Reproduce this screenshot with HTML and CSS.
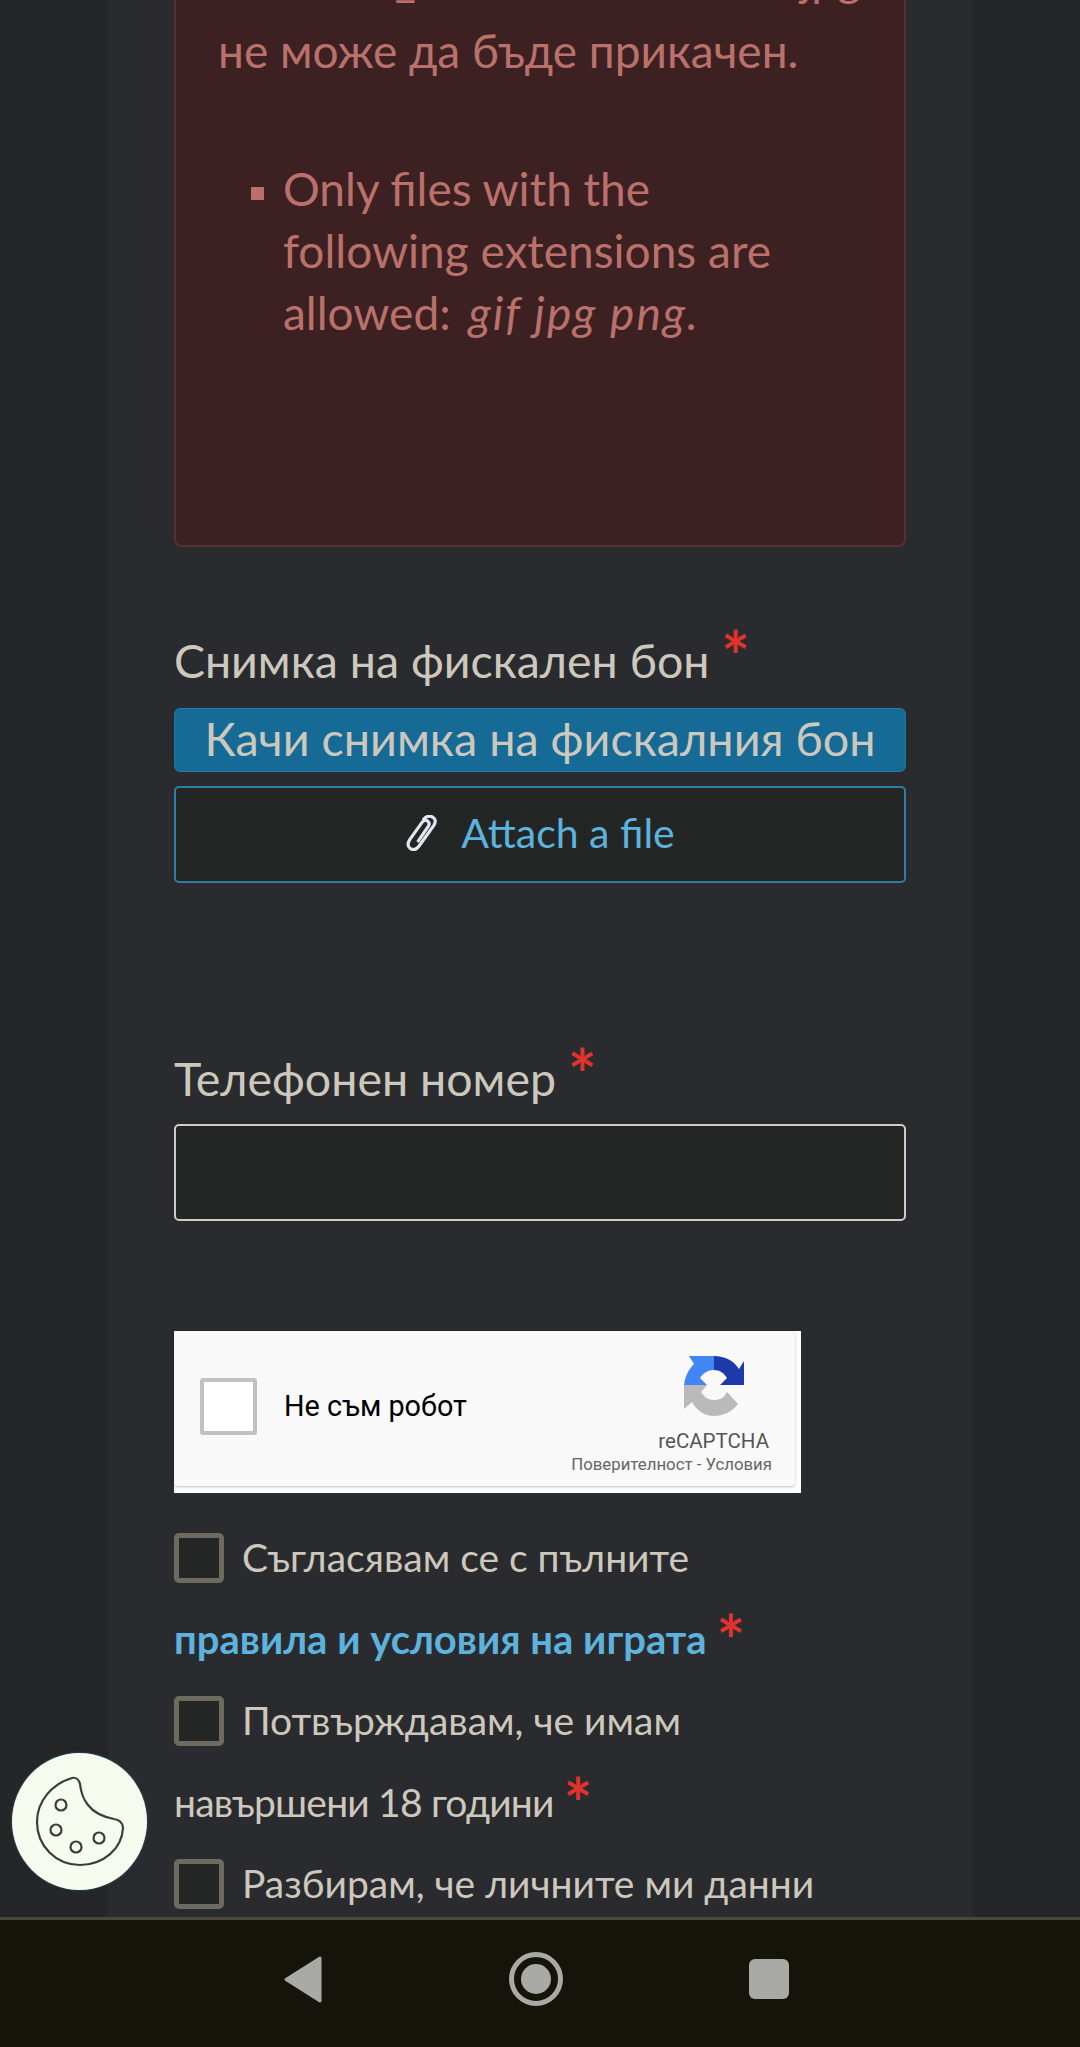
FILE: index.html
```html
<!DOCTYPE html>
<html lang="bg">
<head>
    <meta charset="UTF-8">
    <meta name="viewport" content="width=device-width, initial-scale=1.0">
    <title>Регистрация на фискален бон</title>
    <link rel="stylesheet" href="styles.css">
</head>
<body>
    <div class="screen">
        <div class="content">
            <form class="panel">
                <!-- Upload error -->
                <div class="alert">
                    <p class="alert-text"><span class="alert-file">Файл 12_20230415123456.jpg</span> не може да бъде прикачен.</p>
                    <ul class="alert-list">
                        <li lang="en">Only files with the following extensions are allowed: <em>gif jpg png.</em></li>
                    </ul>
                </div>

                <div class="field field-file">
                    <label class="field-label">Снимка на фискален бон <span class="req">*</span></label>
                    <div class="upload-title">Качи снимка на фискалния бон</div>
                    <button type="button" class="attach" lang="en">
                        <svg class="clip" viewBox="0 0 30 34" fill="none" stroke="#e2e6f0" stroke-width="3" stroke-linecap="round" stroke-linejoin="round">
                            <path d="M12.500 24.500 L22 10.500 C23.500 8 22.500 6.500 21 5.500 C19.500 4.500 17.500 5 16 7 L4.500 23 C2 27 2.500 30 5 31.800 C7.500 33.300 10.500 32.800 13 29.500 L27 10 C29.500 6 28.500 3.500 26 2 C23 0.500 20 1 17.500 4"/>
                        </svg>
                        Attach a file
                    </button>
                </div>

                <div class="field field-phone">
                    <label class="field-label">Телефонен номер <span class="req">*</span></label>
                    <input type="text" class="text-input">
                </div>

                <!-- reCAPTCHA widget -->
                <div class="captcha">
                    <div class="captcha-card">
                        <span class="captcha-box"></span>
                        <span class="captcha-label">Не съм робот</span>
                        <div class="captcha-brand">
                            <svg class="captcha-logo" viewBox="0 0 60 62">
                                <path fill="#4285f4" d="M0 30 C1 22 4 15 10 9 L5 1 L30 1 L30 15 C24 15 19 18 16 23 L23 30 Z"/>
                                <path fill="#1c3aa9" d="M30 1 C41 1 50 6 55 14 L60 6 L60 30 L36 30 L43 23 C40 18 36 15 30 15 Z"/>
                                <path fill="#bababa" d="M0 30 L23 30 L17 37 C20 42 24 45 30 45 C36 45 40 43 43 37 L54 49 C49 56 40 61 30 61 C21 61 13 56 8 47 L0 54 Z"/>
                            </svg>
                            <span class="captcha-name" lang="en">reCAPTCHA</span>
                            <span class="captcha-links">Поверителност - Условия</span>
                        </div>
                    </div>
                </div>

                <div class="consents">
                    <label class="consent"><span class="check"></span>Съгласявам се с пълните <a href="#" class="terms">правила и условия на играта</a> <span class="req">*</span></label>
                    <label class="consent"><span class="check"></span>Потвърждавам, че имам <span class="keep">навършени 18 години</span> <span class="req">*</span></label>
                    <label class="consent"><span class="check"></span>Разбирам, че личните ми данни <span class="keep">ще бъдат обработени</span></label>
                </div>
            </form>

            <button type="button" class="cookie-btn" aria-label="Бисквитки">
                <svg viewBox="0 0 135 137" fill="none" stroke="#3b3d3a" stroke-width="2.200">
                    <path d="M60 25 C64 24 67 27 68 31 C69 40 71 46 76 52 C82 60 92 64 102 66 C108 67 111 70 111 75 C110 96 91 112 68 112 C44 112 25 93 25 69 C25 48 40 31 60 25 Z"/>
                    <circle cx="49" cy="52" r="5.500"/>
                    <circle cx="44" cy="77" r="5.500"/>
                    <circle cx="64" cy="94" r="5.500"/>
                    <circle cx="87" cy="85" r="5.500"/>
                </svg>
            </button>
        </div>

        <!-- Android navigation bar -->
        <nav class="nav-bar">
            <svg class="nav-back" viewBox="0 0 38 47">
                <path fill="#a9a9a5" stroke="#a9a9a5" stroke-width="3" stroke-linejoin="round" d="M36 2 L2 23.500 L36 45 Z"/>
            </svg>
            <span class="nav-home"><span class="nav-home-dot"></span></span>
            <span class="nav-recent"></span>
        </nav>
    </div>
</body>
</html>
```

FILE: styles.css
```css
* {
    box-sizing: border-box;
}

body {
    margin: 0;
    font-family: 'Lato', 'Noto Sans', sans-serif;
    color: #cdc8bd;
}

.screen {
    width: 1080px;
    height: 2047px;
    display: flex;
    flex-direction: column;
    overflow: hidden;
}

.content {
    position: relative;
    flex: 1;
    min-height: 0;
    overflow: hidden;
    background-color: #242627;
}

.panel {
    margin: -54px 108px 0 108px;
    padding: 0 66px;
    background-color: #2a2b2e;
}

.alert {
    height: 601px;
    padding: 0 42px;
    font-size: 46px;
    line-height: 62px;
    color: #bb716b;
    background-color: #3d2122;
    border: 2px solid #573032;
    border-radius: 8px;
}

.alert-text {
    margin: 0;
}

.alert-file {
    display: block;
    margin-bottom: 10px;
    white-space: nowrap;
}

.alert-list {
    max-width: 590px;
    margin: 76px 0 0 0;
    padding: 0 0 0 65px;
    list-style: square;
}

.alert-list li::marker {
    font-size: 38px;
}

.alert-list em {
    margin-left: 6px;
    letter-spacing: 2px;
}

.field {
    font-size: 46.500px;
}

.field-file {
    margin-top: 82px;
}

.field-label {
    display: block;
    line-height: 62px;
}

.req {
    color: #e1322d;
    font-size: 68px;
    font-weight: 700;
    line-height: 0;
    vertical-align: -4px;
}

.upload-title {
    margin-top: 17px;
    height: 64px;
    font-size: 46.700px;
    line-height: 58px;
    text-align: center;
    white-space: nowrap;
    background-color: #166a96;
    border: 1px solid #1f7aa8;
    border-radius: 6px;
}

.attach {
    width: 100%;
    height: 97px;
    margin-top: 14px;
    padding: 0 0 4px 0;
    display: flex;
    align-items: center;
    justify-content: center;
    gap: 24px;
    font-family: inherit;
    font-size: 41px;
    color: #5db2de;
    background-color: #242626;
    border: 2px solid #2f7ea6;
    border-radius: 5px;
}

.clip {
    width: 32px;
    height: 36px;
}

.field-phone {
    margin-top: 164px;
}

.text-input {
    display: block;
    width: 100%;
    height: 97px;
    margin-top: 15px;
    background-color: #242626;
    border: 2px solid #d0ccc3;
    border-radius: 5px;
}

.captcha {
    width: 627px;
    height: 162px;
    margin-top: 110px;
    background-color: #fff;
    font-family: 'Roboto', sans-serif;
}

.captcha-card {
    width: 621px;
    height: 155px;
    display: flex;
    align-items: center;
    padding: 0 23px 0 26px;
    background-color: #f9f9f9;
    border-radius: 4px;
    box-shadow: 0 1px 3px rgba(0, 0, 0, 0.25);
}

.captcha-box {
    width: 57px;
    height: 57px;
    margin-top: -5px;
    background-color: #fff;
    border: 4px solid #c1c1c1;
    border-radius: 3px;
}

.captcha-label {
    margin: -5px 0 0 27px;
    font-size: 28.800px;
    color: #000;
}

.captcha-brand {
    margin-left: auto;
    display: flex;
    flex-direction: column;
    align-items: flex-end;
    align-self: flex-start;
    padding-top: 24px;
}

.captcha-logo {
    width: 60px;
    height: 62px;
    margin-right: 28px;
}

.captcha-name {
    margin-top: 11px;
    margin-right: 3px;
    font-size: 20.500px;
    line-height: 26px;
    color: #555;
}

.captcha-links {
    margin-top: 0;
    font-size: 16.800px;
    line-height: 20px;
    color: #666;
    white-space: nowrap;
}

.consents {
    margin-top: 24px;
    font-size: 39px;
    line-height: 81.500px;
}

.consent {
    display: block;
}

.consent .req {
    vertical-align: -12px;
}

.keep,
.terms {
    white-space: nowrap;
}

.keep {
    letter-spacing: -0.800px;
}

.check {
    display: inline-block;
    width: 50px;
    height: 50px;
    margin-right: 18px;
    vertical-align: -11px;
    background-color: #242626;
    border: 5px solid #6f6a5f;
    border-radius: 5px;
}

.terms {
    font-size: 40px;
    font-weight: 700;
    color: #5db2de;
    text-decoration: none;
}

.cookie-btn {
    position: absolute;
    left: 12px;
    top: 1753px;
    width: 135px;
    height: 137px;
    padding: 0;
    background-color: #f6fbf0;
    border: none;
    border-radius: 50%;
    box-shadow: 0 0 2px #2f6f96;
}

.cookie-btn svg {
    display: block;
    width: 100%;
    height: 100%;
}

.nav-bar {
    height: 130px;
    display: flex;
    align-items: center;
    padding: 0 0 9px 284px;
    background-color: #15140b;
    border-top: 3px solid #4a4838;
}

.nav-back {
    width: 38px;
    height: 47px;
}

.nav-home {
    width: 54px;
    height: 54px;
    margin-left: 187px;
    display: flex;
    align-items: center;
    justify-content: center;
    border: 5px solid #a9a9a5;
    border-radius: 50%;
}

.nav-home-dot {
    width: 30px;
    height: 30px;
    background-color: #a9a9a5;
    border-radius: 50%;
}

.nav-recent {
    width: 40px;
    height: 40px;
    margin-left: 186px;
    background-color: #a9a9a5;
    border-radius: 6px;
}
```
